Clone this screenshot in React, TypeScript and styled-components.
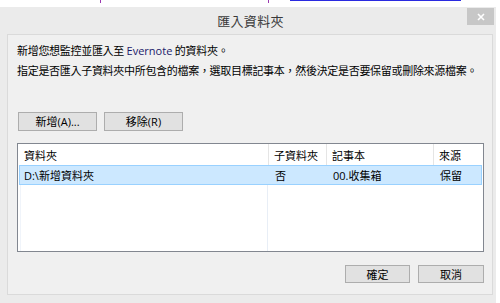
import styled, { createGlobalStyle } from 'styled-components';

const GlobalStyle = createGlobalStyle`
    html, body {
        margin: 0;
        padding: 0;
        background: #ffffff;
    }
    body {
        width: 500px;
        height: 303px;
        overflow: hidden;
        font-family: 'Open Sans', 'Noto Sans CJK TC', sans-serif;
        font-size: 11px;
        color: #000000;
    }
`;

const Page = styled.div`
    display: flex;
    flex-direction: column;
    width: 500px;
    height: 303px;
`;

const BackdropStrip = styled.div`
    display: flex;
    align-items: flex-start;
    height: 7px;
`;

const BackdropMark = styled.span<{ $left: number; $width: number; $height: number; $color: string }>`
    display: block;
    margin-left: ${(props) => props.$left}px;
    width: ${(props) => props.$width}px;
    height: ${(props) => props.$height}px;
    background: ${(props) => props.$color};
`;

const Dialog = styled.div`
    display: flex;
    flex-direction: column;
    width: 496px;
    height: 296px;
    background: #ebebeb;
`;

const TitleBar = styled.div`
    display: grid;
    grid-template-columns: 1fr auto 1fr;
    height: 27px;
`;

const Title = styled.div`
    grid-column: 2;
    align-self: center;
    padding-left: 5px;
    font-size: 13px;
    color: #3a3a3a;
    letter-spacing: 0.3px;
`;

const CloseButton = styled.button`
    grid-column: 3;
    justify-self: end;
    align-self: start;
    display: flex;
    align-items: center;
    justify-content: center;
    width: 27px;
    height: 17px;
    margin: 1px 2px 0 0;
    padding: 0;
    border: none;
    background: #c7c7c7;
`;

const Panel = styled.div`
    display: flex;
    flex-direction: column;
    height: 261px;
    margin: 0 3px 0 7px;
    padding: 6px 8px 0 9px;
    box-sizing: border-box;
    background: #f0f0f0;
    border: 1px solid #dadada;
`;

const Line = styled.p`
    margin: 0;
    line-height: 20px;
    letter-spacing: -0.3px;
    white-space: nowrap;
`;

const ButtonRow = styled.div<{ $align: 'start' | 'end' }>`
    display: flex;
    justify-content: ${(props) => (props.$align === 'end' ? 'flex-end' : 'flex-start')};
    gap: ${(props) => (props.$align === 'end' ? 8 : 7)}px;
    margin-top: ${(props) => (props.$align === 'end' ? 13 : 31)}px;
    padding-left: ${(props) => (props.$align === 'end' ? 0 : 1)}px;
`;

const Button = styled.button<{ $width: number; $height: number }>`
    width: ${(props) => props.$width}px;
    height: ${(props) => props.$height}px;
    padding: 0;
    border: 1px solid #adadad;
    background: #e1e1e1;
    font-family: inherit;
    font-size: 11px;
    color: #000000;
    line-height: 1;
`;

const ListView = styled.div`
    display: flex;
    flex-direction: column;
    height: 109px;
    margin-top: 12px;
    padding: 0 1px;
    box-sizing: border-box;
    background: #ffffff;
    border: 1px solid #828790;
`;

const Columns = styled.div`
    display: grid;
    grid-template-columns: 249px 58px 107px 1fr;
    align-items: stretch;
`;

const HeaderRow = styled(Columns)`
    height: 21px;
`;

const HeaderCell = styled.div<{ $first?: boolean }>`
    display: flex;
    align-items: center;
    padding-left: 5px;
    border-left: ${(props) => (props.$first ? 'none' : '1px solid #e5e5e5')};
`;

const DataRow = styled(Columns)<{ $selected?: boolean }>`
    height: 20px;
    box-sizing: border-box;
    background: ${(props) => (props.$selected ? '#cce8ff' : 'transparent')};
    border: 1px solid ${(props) => (props.$selected ? '#99d1ff' : 'transparent')};
`;

const DataCell = styled.div<{ $first?: boolean }>`
    display: flex;
    align-items: center;
    padding-left: ${(props) => (props.$first ? 4 : 5)}px;
    margin-left: ${(props) => (props.$first ? 0 : 1)}px;
    white-space: nowrap;
`;

const Filler = styled(Columns)`
    flex: 1;
`;

const FillerColumn = styled.div<{ $first?: boolean }>`
    border-left: ${(props) => (props.$first ? '1px solid #f0f4fa' : 'none')};
    border-right: ${(props) => (props.$first ? '1px solid #e8eef6' : 'none')};
    margin-left: ${(props) => (props.$first ? 1 : 0)}px;
`;

const Latin = styled.span`
    color: #1a1a6a;
    letter-spacing: 0;
`;

const headers = ['資料夾', '子資料夾', '記事本', '來源'];

const rows = [{ folder: 'D:\\新增資料夾', sub: '否', notebook: '00.收集箱', source: '保留' }];

export default function App() {
    return (
        <Page>
            <GlobalStyle />
            <BackdropStrip>
                <BackdropMark $left={100} $width={1} $height={3} $color="#9b3ab0" />
                <BackdropMark $left={167} $width={1} $height={3} $color="#9b3ab0" />
                <BackdropMark $left={21} $width={171} $height={1} $color="#2a2ae0" />
            </BackdropStrip>
            <Dialog>
                <TitleBar>
                    <Title>匯入資料夾</Title>
                    <CloseButton aria-label="關閉">
                        <svg width="8" height="8" viewBox="0 0 8 8">
                            <path d="M1 1L7 7M7 1L1 7" stroke="#ffffff" strokeWidth="1.6" />
                        </svg>
                    </CloseButton>
                </TitleBar>
                <Panel>
                    <Line>
                        新增您想監控並匯入至 <Latin>Evernote</Latin> 的資料夾。
                    </Line>
                    <Line>指定是否匯入子資料夾中所包含的檔案，選取目標記事本，然後決定是否要保留或刪除來源檔案。</Line>
                    <ButtonRow $align="start">
                        <Button $width={79} $height={19}>
                            新增(A)...
                        </Button>
                        <Button $width={79} $height={19}>
                            移除(R)
                        </Button>
                    </ButtonRow>
                    <ListView>
                        <HeaderRow>
                            {headers.map((h, i) => (
                                <HeaderCell key={h} $first={i === 0}>
                                    {h}
                                </HeaderCell>
                            ))}
                        </HeaderRow>
                        {rows.map((r) => (
                            <DataRow key={r.folder} $selected>
                                <DataCell $first>{r.folder}</DataCell>
                                <DataCell>{r.sub}</DataCell>
                                <DataCell>{r.notebook}</DataCell>
                                <DataCell>{r.source}</DataCell>
                            </DataRow>
                        ))}
                        <Filler>
                            <FillerColumn $first />
                            <FillerColumn />
                            <FillerColumn />
                            <FillerColumn />
                        </Filler>
                    </ListView>
                    <ButtonRow $align="end">
                        <Button $width={65} $height={18}>
                            確定
                        </Button>
                        <Button $width={66} $height={18}>
                            取消
                        </Button>
                    </ButtonRow>
                </Panel>
            </Dialog>
        </Page>
    );
}
